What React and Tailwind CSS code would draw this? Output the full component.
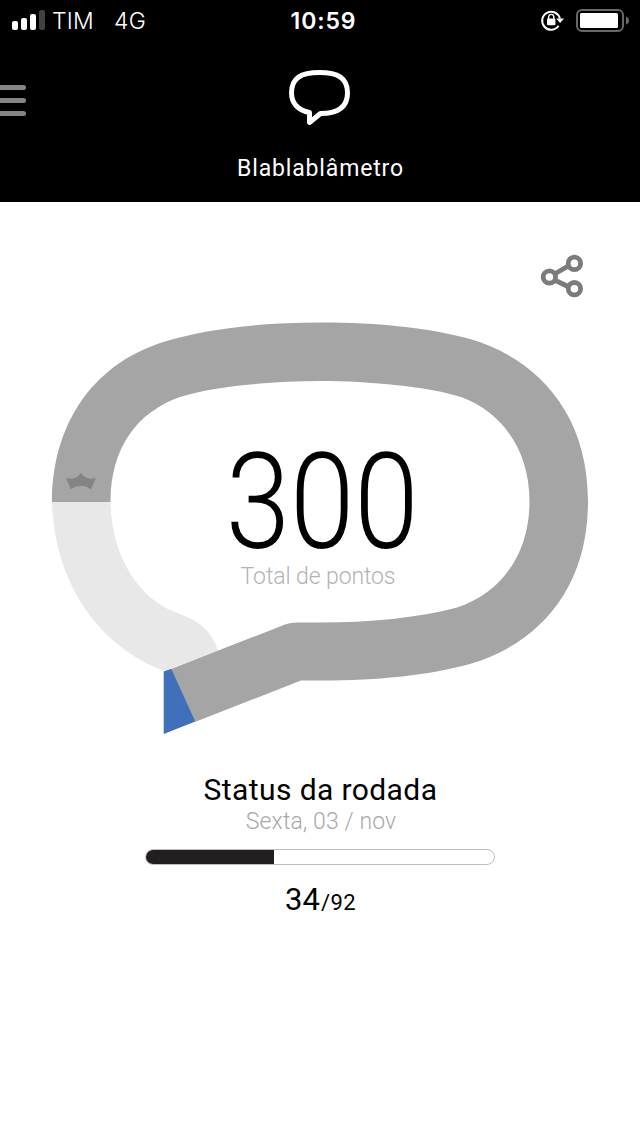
function StatusBar() {
  return (
    <div className="grid h-10 grid-cols-3 items-center font-['Inter',sans-serif] text-white">
      <div className="flex items-center pl-3">
        <div className="flex h-5 items-end gap-[3px]">
          <span className="h-[9px] w-1.5 rounded-[2px] bg-white" />
          <span className="h-3 w-1.5 rounded-[2px] bg-white" />
          <span className="h-4 w-1.5 rounded-[2px] bg-white" />
          <span className="h-5 w-1.5 rounded-[2px] bg-[#404040]" />
        </div>
        <span className="ml-[7px] pt-0.5 text-[23px] leading-[38px] font-light tracking-[0.2px]">TIM</span>
        <span className="ml-5 pt-0.5 text-[23px] leading-[38px] font-light tracking-[0.4px]">4G</span>
      </div>
      <div className="pt-0.5 pl-[7px] text-center text-[23px] leading-[38px] font-semibold tracking-[0.9px]">10:59</div>
      <div className="flex items-center justify-end pr-[11px]">
        <svg className="mr-[11px] h-6 w-6" viewBox="540 8 24 24" fill="none">
          <path d="M558.6 25.8A9 9 0 1 1 559.9 18.5" stroke="white" strokeWidth="2" />
          <path d="M556.2 18.6H564L560.1 23Z" fill="white" />
          <rect x="547" y="18.5" width="8.4" height="6.7" rx="1" fill="white" />
          <path d="M548.6 19V17a2.6 2.6 0 0 1 5.2 0v2" stroke="white" strokeWidth="1.4" />
        </svg>
        <svg className="h-6 w-[54px]" viewBox="575 8 54 24">
          <rect x="577" y="10" width="46" height="21" rx="5" fill="none" stroke="#686868" strokeWidth="2" />
          <rect x="580" y="13" width="38" height="15" rx="1.5" fill="white" />
          <path d="M626 16.5q3 1 3 4t-3 4Z" fill="#686868" />
        </svg>
      </div>
    </div>
  );
}

function Header() {
  return (
    <header className="flex h-[202px] flex-col bg-black">
      <StatusBar />
      <div className="grid grid-cols-3 pt-[29px]">
        <div className="flex flex-col gap-2 pt-4">
          <span className="h-[5px] w-[26px] rounded-r-full bg-[#858585]" />
          <span className="h-[5px] w-[26px] rounded-r-full bg-[#858585]" />
          <span className="h-[5px] w-[26px] rounded-r-full bg-[#858585]" />
        </div>
        <svg className="h-14 w-16 justify-self-center" viewBox="288 69 64 56" fill="none">
          <path
            d="M309.5 112.500C298 110.500 291.500 103 291.500 93C291.500 78 301 72.500 319.500 72.500C338 72.500 347.500 78 347.500 93C347.500 107.500 337.500 113.500 320.500 113.500L309.500 122.500Z"
            stroke="white"
            strokeWidth="5"
            strokeLinejoin="round"
          />
        </svg>
      </div>
      <h1 className="mt-[27px] pl-px text-center text-[23px] leading-[34px] tracking-[0.85px] text-white">Blablablâmetro</h1>
    </header>
  );
}

function ShareIcon() {
  return (
    <svg className="h-11 w-11" viewBox="540 254 44 44" fill="none" stroke="#7b7b7b" strokeWidth="4.8">
      <path d="M554.500 274 569 265.700M554.500 280 569 287" />
      <circle cx="549.4" cy="277" r="6.200" />
      <circle cx="574.4" cy="263.4" r="6.200" />
      <circle cx="574.4" cy="288.700" r="6.200" />
    </svg>
  );
}

function Gauge() {
  return (
    <svg className="col-start-1 row-start-1 h-[414px] w-[538px]" viewBox="51 321 538 414">
      <path
        fill="#e8e8e8"
        d="M52 501C54 580 96 645 164 671L218 650.500C211 631 200 622 185 616L175 612C138 598 111 555 110.500 501Z"
      />
      <path
        fill="#a5a5a5"
        d="M52 502C52 430 88 365 165 341.500C205 329 260 322.500 320 322.500C380 322.500 430 328 470 339C532 357 588 408 588 501.500C588 595 532 646 470 664C430 675 380 680.500 320 680.500H301L195 722L171 669L280 626.500Q288 622.500 298 622.500H320C370 622.500 418 618 457 607.500C502 593 529.500 553 529.500 501.500C529.500 450 502 412 461 397C430 387 370 381 320 381C270 381 210 387 180 397C137 412 110.500 448 110.500 502Z"
      />
      <path fill="#4070b9" d="M163.700 671.500 171.300 668.700 195.300 721.500 163.700 734Z" />
      <path
        fill="#848484"
        d="M66 477.700Q71 479.500 75.500 477.800Q78.500 476.500 80.700 473Q83.500 476.500 86.500 477.800Q91 479.500 96 477.700L91 489.200Q81 482.500 70.700 489.200Z"
      />
    </svg>
  );
}

function Score() {
  return (
    <div className="col-start-1 row-start-1 flex flex-col items-center pt-[127px]">
      <div className="h-[110px] origin-center scale-x-[0.865] pl-1 text-[134px] leading-[110px] font-light text-black">300</div>
      <div className="mt-[5px] pr-1 text-[23px] leading-7 font-light tracking-[-0.1px] text-[#b3b3b3]">Total de pontos</div>
    </div>
  );
}

function RoundStatus({ played, total }) {
  return (
    <section className="mt-[33px] flex flex-col items-center">
      <h2 className="h-10 pl-px text-[30px] leading-[44px] tracking-[0.4px] text-black">Status da rodada</h2>
      <p className="pl-0.5 text-[23px] leading-7 font-light tracking-[0.1px] text-[#a8a8a8]">Sexta, 03 / nov</p>
      <div className="mt-[13px] h-4 w-[350px] overflow-hidden rounded-lg border border-[#bdbdbd] bg-white">
        <div className="-mt-px -ml-px h-4 w-[129px] bg-[#231f20]" />
      </div>
      <p className="mt-[15px] flex items-baseline pl-px leading-10 text-black">
        <span className="text-[31px]">{played}</span>
        <span className="ml-px text-[22px] tracking-[0.4px]">/{total}</span>
      </p>
    </section>
  );
}

export default function App() {
  return (
    <div className="flex h-[1136px] w-[640px] flex-col overflow-hidden bg-white font-['Roboto',sans-serif]">
      <Header />
      <main className="flex flex-col items-center">
        <div className="mt-[52px] mr-14 h-11 self-end">
          <ShareIcon />
        </div>
        <div className="mt-[23px] grid justify-items-center">
          <Gauge />
          <Score />
        </div>
        <RoundStatus played={34} total={92} />
      </main>
    </div>
  );
}
